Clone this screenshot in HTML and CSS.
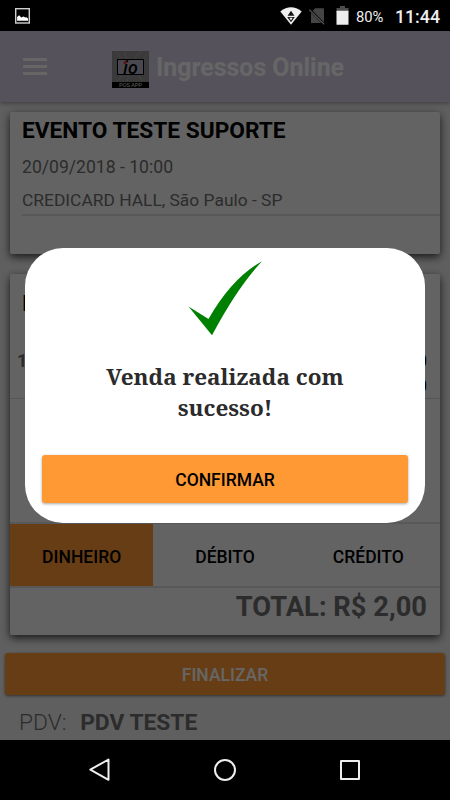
FILE: index.html
```html
<!DOCTYPE html>
<html lang="pt-BR">
<head>
    <meta charset="UTF-8">
    <meta name="viewport" content="width=device-width, initial-scale=1.0">
    <title>Ingressos Online</title>
    <link rel="stylesheet" href="styles.css">
</head>
<body>
    <div class="status-bar">
        <svg class="icon-photo" width="16" height="16" viewBox="0 0 16 16">
            <rect x=".7" y=".7" width="13.6" height="14.3" fill="none" stroke="#d0d0d0" stroke-width="1.4"/>
            <path d="M2.1 12.8V9l2-1.8 2.2 2.2 2.2-.8 1.8 1 1.3-.3 1.4 1.2v2.3z" fill="#fff"/>
        </svg>
        <div class="status-right">
            <svg class="icon-wifi" width="22" height="18" viewBox="0 0 22 18">
                <path d="M.3 4.5Q11-3.8 21.7 4.5L11 17.8z" fill="#eee"/>
                <path d="M11 3.8l3.4 5H7.6zM7.2 10h7.6L11 15.2z" fill="#111"/>
                <path d="M9.3 10.8h3.4L11 13.4z" fill="#eee"/>
            </svg>
            <svg class="icon-sim" width="17" height="18" viewBox="0 0 17 18">
                <path d="M6 1.3h8.2q.8 0 .8.8v14H2V5.5z" fill="#444"/>
                <path d="M1 2.8l14.5 14.7" stroke="#000" stroke-width="2.4"/>
                <path d="M.3 2.8l14.8 14.5" stroke="#555" stroke-width="1.2"/>
            </svg>
            <svg class="icon-battery" width="13" height="19" viewBox="0 0 13 19">
                <path d="M4 0h5v2h3.5v3H.5V2H4z" fill="#4c4c4c"/>
                <rect x=".5" y="4.7" width="12" height="14" rx=".5" fill="#eee"/>
            </svg>
            <span class="battery">80%</span>
            <span class="clock">11:44</span>
        </div>
    </div>

    <div class="app">
        <header class="toolbar">
            <div class="menu"><i></i><i></i><i></i></div>
            <svg class="logo" width="37" height="37" viewBox="0 0 37 37">
                <rect width="37" height="37" fill="#929292"/>
                <path d="M4 0l6 9M12 0l3 9M22 8l7-8M30 10l5-8M5 31l5-7M15 31l2-7M30 31l-3-7" stroke="#a2a2a2" stroke-width="1.2"/>
                <rect x="5.5" y="8.5" width="26" height="15" fill="#b9b4c6" stroke="#000"/>
                <text x="11" y="22.5" class="logo-io" textLength="15" lengthAdjust="spacingAndGlyphs">io</text>
                <path d="M13 9.5l.7 1.2 1.5.2-1.1 1 .2 1.5-1.3-.7-1.3.7.2-1.5-1.1-1 1.5-.2z" fill="#ff2020"/>
                <rect y="31" width="37" height="6" fill="#000"/>
                <text x="7" y="36.3" class="logo-name" textLength="23">POS APP</text>
            </svg>
            <h1>Ingressos Online</h1>
        </header>

        <main>
            <section class="card event">
                <h2>EVENTO TESTE SUPORTE</h2>
                <p class="date">20/09/2018 - 10:00</p>
                <p class="place">CREDICARD HALL, São Paulo - SP</p>
            </section>

            <section class="card order">
                <div class="items">
                    <h2>INTEIRA</h2>
                    <div class="item">
                        <b>1</b>
                        <div class="prices"><span>R$ 2,00</span><span>R$ 0,00</span></div>
                    </div>
                </div>
                <div class="payments">
                    <div class="payment active">DINHEIRO</div>
                    <div class="payment">DÉBITO</div>
                    <div class="payment">CRÉDITO</div>
                </div>
                <div class="total">TOTAL: R$ 2,00</div>
            </section>

            <button class="finish">FINALIZAR</button>
            <p class="pdv">PDV: <b>PDV TESTE</b></p>
        </main>
        <div class="overlay">
            <div class="dialog">
                <svg class="check" width="76" height="78" viewBox="0 0 76 78">
                    <path d="M.5 46.5L20.5 59Q44 18 74 1.2Q49 28 24 75.3z" fill="#008000"/>
                </svg>
                <p>Venda realizada com<br>sucesso!</p>
                <button class="confirm">CONFIRMAR</button>
            </div>
        </div>
    </div>

    <nav class="nav-bar">
        <svg width="24" height="26" viewBox="0 0 24 26"><path d="M20.5 2.5v20.3L2.3 12.7z" fill="none" stroke="#eee" stroke-width="2" stroke-linejoin="round"/></svg>
        <svg width="24" height="26" viewBox="0 0 24 26"><circle cx="12" cy="13" r="10" fill="none" stroke="#eee" stroke-width="2"/></svg>
        <svg width="24" height="26" viewBox="0 0 24 26"><rect x="3" y="4" width="18" height="18" fill="none" stroke="#eee" stroke-width="2" stroke-linejoin="round"/></svg>
    </nav>
</body>
</html>
```
FILE: styles.css
```css
* {
    box-sizing: border-box;
}
body {
    margin: 0;
    width: 450px;
    height: 800px;
    display: flex;
    flex-direction: column;
    overflow: hidden;
    background: #000;
    font-family: Roboto, sans-serif;
}
h1, h2, p {
    margin: 0;
}
svg {
    display: block;
    flex-shrink: 0;
}

/* status bar */
.status-bar {
    height: 31px;
    display: flex;
    align-items: center;
    justify-content: space-between;
    padding: 1px 10px 0 15px;
    color: #eee;
}
.status-right {
    display: flex;
    align-items: center;
}
.icon-sim {
    margin-left: 7px;
}
.icon-battery {
    margin-left: 10px;
    margin-top: -2px;
}
.battery {
    width: 33px;
    margin-left: 7px;
    padding-top: 1px;
    font-size: 14.8px;
}
.clock {
    margin-left: 6px;
    font-size: 17.8px;
    font-weight: 500;
}

/* app */
.app {
    position: relative;
    height: 709px;
    background: #eee;
}
.toolbar {
    height: 71px;
    display: flex;
    align-items: center;
    padding-left: 23px;
    background: #d5cde6;
    box-shadow: 0 1px 5px rgba(0, 0, 0, 0.4);
}
.menu {
    width: 24px;
    display: flex;
    flex-direction: column;
    gap: 4px;
}
.menu i {
    height: 2.7px;
    background: #fff;
}
.logo {
    margin-top: 6px;
    margin-left: 65px;
}
.logo-io {
    font: italic 600 18px "Open Sans", sans-serif;
}
.logo-name {
    font: 6px Roboto, sans-serif;
    fill: #ddd;
}
.toolbar h1 {
    margin-top: 2px;
    margin-left: 7px;
    font-size: 24.9px;
    font-weight: 700;
    color: #fff;
    white-space: nowrap;
}
main {
    padding: 10px 5px 0;
}
.card {
    margin: 0 5px;
    background: #f8f8f8;
    border-radius: 2px;
    box-shadow: 0 3px 8px rgba(0, 0, 0, 0.75);
}
.card h2 {
    font-size: 22.7px;
    line-height: 26px;
    font-weight: 700;
}
.event {
    height: 142px;
    padding: 6px 0 0 12px;
    color: #6e6e6e;
    font-size: 17.6px;
}
.event h2 {
    color: #000;
}
.date {
    margin-top: 12px;
    line-height: 22px;
}
.place {
    height: 27px;
    margin-top: 11px;
    line-height: 22px;
    font-size: 17.4px;
    border-bottom: 2px solid #dcdcdc;
}
.order {
    height: 361px;
    margin-top: 20px;
}
.items {
    height: 125px;
    padding: 17px 13px 0 7px;
    border-bottom: 1px solid #d8d8d8;
}
.items h2 {
    padding-left: 5px;
}
.item {
    display: flex;
    justify-content: space-between;
    margin-top: 31px;
    font-size: 18px;
    line-height: 25px;
}
.item b {
    color: #6e6e6e;
}
.prices {
    display: flex;
    flex-direction: column;
    font-weight: 500;
}
.payments {
    height: 66px;
    margin-top: 123px;
    display: flex;
    border-top: 2px solid #dcdcdc;
    border-bottom: 2px solid #dcdcdc;
}
.payment {
    flex: 1;
    display: flex;
    align-items: center;
    justify-content: center;
    padding-top: 4px;
    font-size: 17.5px;
    font-weight: 500;
}
.active {
    background: #ff9933;
}
.total {
    padding: 1px 13px 0 0;
    text-align: right;
    font-size: 27.3px;
    line-height: 36px;
    font-weight: 700;
    color: #6e6e6e;
}
button {
    display: block;
    padding: 2px 0 0;
    border: none;
    border-radius: 3px;
    background: #ff9933;
    font-family: Roboto, sans-serif;
    font-size: 17.5px;
    font-weight: 500;
    box-shadow: 0 1px 3px rgba(0, 0, 0, 0.5);
}
.finish {
    width: 440px;
    height: 42px;
    margin-top: 18px;
    color: #fff;
}
.pdv {
    margin: 14px 0 0 14px;
    font-size: 22.8px;
    line-height: 28px;
    font-weight: 300;
    color: #6e6e6e;
}
.pdv b {
    margin-left: 8px;
    font-weight: 700;
}

/* dialog */
.overlay {
    position: absolute;
    inset: 0;
    padding: 217px 25px 0;
    background: rgba(0, 0, 0, 0.6);
}
.dialog {
    height: 274.5px;
    padding: 12px 17px 0;
    background: #fff;
    border-radius: 38px;
}
.check {
    margin-left: 146px;
}
.dialog p {
    margin-top: 23px;
    text-align: center;
    font-family: "Noto Serif", "DejaVu Serif Condensed", "DejaVu Serif", serif;
    font-size: 22.5px;
    line-height: 31px;
    font-weight: 700;
    color: #2b2b2b;
}
.confirm {
    width: 366px;
    height: 48px;
    margin-top: 32px;
    color: #000;
    box-shadow: 0 1px 3px rgba(0, 0, 0, 0.35);
}

/* android buttons */
.nav-bar {
    height: 60px;
    display: flex;
    align-items: center;
    justify-content: center;
    gap: 101px;
}
```
